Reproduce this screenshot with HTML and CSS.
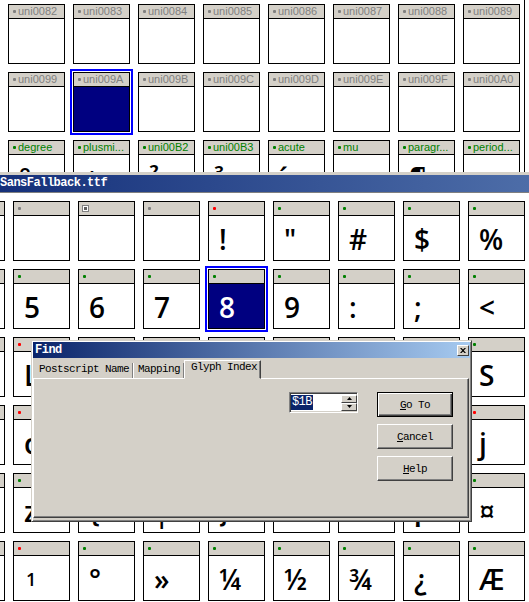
FILE: index.html
```html
<!DOCTYPE html>
<html lang="en">
<head>
  <meta charset="UTF-8">
  <title>Find - SansFallback.ttf</title>
  <link rel="stylesheet" href="styles.css">
</head>
<body>
  <!-- font view behind -->
  <div class="back">
    <div class="glyphs">
      <div class="cell"><div class="head"><i></i>uni0082</div><div class="glyph"></div></div>
      <div class="cell"><div class="head"><i></i>uni0083</div><div class="glyph"></div></div>
      <div class="cell"><div class="head"><i></i>uni0084</div><div class="glyph"></div></div>
      <div class="cell"><div class="head"><i></i>uni0085</div><div class="glyph"></div></div>
      <div class="cell"><div class="head"><i></i>uni0086</div><div class="glyph"></div></div>
      <div class="cell"><div class="head"><i></i>uni0087</div><div class="glyph"></div></div>
      <div class="cell"><div class="head"><i></i>uni0088</div><div class="glyph"></div></div>
      <div class="cell"><div class="head"><i></i>uni0089</div><div class="glyph"></div></div>

      <div class="cell"><div class="head"><i></i>uni0099</div><div class="glyph"></div></div>
      <div class="cell sel"><div class="head"><i></i>uni009A</div><div class="glyph"></div></div>
      <div class="cell"><div class="head"><i></i>uni009B</div><div class="glyph"></div></div>
      <div class="cell"><div class="head"><i></i>uni009C</div><div class="glyph"></div></div>
      <div class="cell"><div class="head"><i></i>uni009D</div><div class="glyph"></div></div>
      <div class="cell"><div class="head"><i></i>uni009E</div><div class="glyph"></div></div>
      <div class="cell"><div class="head"><i></i>uni009F</div><div class="glyph"></div></div>
      <div class="cell"><div class="head"><i></i>uni00A0</div><div class="glyph"></div></div>

      <div class="cell"><div class="head g"><i></i>degree</div><div class="glyph">°</div></div>
      <div class="cell"><div class="head g"><i></i>plusmi...</div><div class="glyph">±</div></div>
      <div class="cell"><div class="head g"><i></i>uni00B2</div><div class="glyph">²</div></div>
      <div class="cell"><div class="head g"><i></i>uni00B3</div><div class="glyph">³</div></div>
      <div class="cell"><div class="head g"><i></i>acute</div><div class="glyph">´</div></div>
      <div class="cell"><div class="head g"><i></i>mu</div><div class="glyph">µ</div></div>
      <div class="cell"><div class="head g"><i></i>paragr...</div><div class="glyph">¶</div></div>
      <div class="cell"><div class="head g"><i></i>period...</div><div class="glyph">·</div></div>
    </div>
    <div class="back-edge"></div>
  </div>

  <!-- font view in front -->
  <div class="front">
    <div class="front-title">SansFallback.ttf</div>
    <div class="glyphs">
      <div class="cell"><div class="head"></div><div class="glyph"></div></div>
      <div class="cell"><div class="head"><i></i></div><div class="glyph"></div></div>
      <div class="cell"><div class="head"><span class="ref-icon"></span></div><div class="glyph"></div></div>
      <div class="cell"><div class="head"><i></i></div><div class="glyph"></div></div>
      <div class="cell"><div class="head r"><i></i></div><div class="glyph">!</div></div>
      <div class="cell"><div class="head g"><i></i></div><div class="glyph">"</div></div>
      <div class="cell"><div class="head g"><i></i></div><div class="glyph">#</div></div>
      <div class="cell"><div class="head g"><i></i></div><div class="glyph">$</div></div>
      <div class="cell"><div class="head g"><i></i></div><div class="glyph">%</div></div>

      <div class="cell"><div class="head g"><i></i></div><div class="glyph">4</div></div>
      <div class="cell"><div class="head g"><i></i></div><div class="glyph">5</div></div>
      <div class="cell"><div class="head g"><i></i></div><div class="glyph">6</div></div>
      <div class="cell"><div class="head g"><i></i></div><div class="glyph">7</div></div>
      <div class="cell sel"><div class="head g"><i></i></div><div class="glyph">8</div></div>
      <div class="cell"><div class="head g"><i></i></div><div class="glyph">9</div></div>
      <div class="cell"><div class="head g"><i></i></div><div class="glyph">:</div></div>
      <div class="cell"><div class="head g"><i></i></div><div class="glyph">;</div></div>
      <div class="cell"><div class="head g"><i></i></div><div class="glyph">&lt;</div></div>

      <div class="cell"><div class="head g"><i></i></div><div class="glyph">K</div></div>
      <div class="cell"><div class="head r"><i></i></div><div class="glyph">L</div></div>
      <div class="cell"><div class="head g"><i></i></div><div class="glyph">M</div></div>
      <div class="cell"><div class="head g"><i></i></div><div class="glyph">N</div></div>
      <div class="cell"><div class="head g"><i></i></div><div class="glyph">O</div></div>
      <div class="cell"><div class="head g"><i></i></div><div class="glyph">P</div></div>
      <div class="cell"><div class="head g"><i></i></div><div class="glyph">Q</div></div>
      <div class="cell"><div class="head g"><i></i></div><div class="glyph">R</div></div>
      <div class="cell"><div class="head g"><i></i></div><div class="glyph">S</div></div>

      <div class="cell"><div class="head g"><i></i></div><div class="glyph">b</div></div>
      <div class="cell"><div class="head r"><i></i></div><div class="glyph">c</div></div>
      <div class="cell"><div class="head g"><i></i></div><div class="glyph">d</div></div>
      <div class="cell"><div class="head g"><i></i></div><div class="glyph">e</div></div>
      <div class="cell"><div class="head g"><i></i></div><div class="glyph">f</div></div>
      <div class="cell"><div class="head g"><i></i></div><div class="glyph">g</div></div>
      <div class="cell"><div class="head g"><i></i></div><div class="glyph">h</div></div>
      <div class="cell"><div class="head g"><i></i></div><div class="glyph">i</div></div>
      <div class="cell"><div class="head r"><i></i></div><div class="glyph">j</div></div>

      <div class="cell"><div class="head g"><i></i></div><div class="glyph">y</div></div>
      <div class="cell"><div class="head g"><i></i></div><div class="glyph">z</div></div>
      <div class="cell"><div class="head g"><i></i></div><div class="glyph">{</div></div>
      <div class="cell"><div class="head g"><i></i></div><div class="glyph">|</div></div>
      <div class="cell"><div class="head g"><i></i></div><div class="glyph">}</div></div>
      <div class="cell"><div class="head g"><i></i></div><div class="glyph">~</div></div>
      <div class="cell"><div class="head"><i></i></div><div class="glyph"></div></div>
      <div class="cell"><div class="head g"><i></i></div><div class="glyph">¡</div></div>
      <div class="cell"><div class="head g"><i></i></div><div class="glyph">¤</div></div>

      <div class="cell"><div class="head"></div><div class="glyph"></div></div>
      <div class="cell"><div class="head r"><i></i></div><div class="glyph"><span class="sup">1</span></div></div>
      <div class="cell"><div class="head g"><i></i></div><div class="glyph">°</div></div>
      <div class="cell"><div class="head g"><i></i></div><div class="glyph">»</div></div>
      <div class="cell"><div class="head g"><i></i></div><div class="glyph">¼</div></div>
      <div class="cell"><div class="head g"><i></i></div><div class="glyph">½</div></div>
      <div class="cell"><div class="head g"><i></i></div><div class="glyph">¾</div></div>
      <div class="cell"><div class="head g"><i></i></div><div class="glyph">¿</div></div>
      <div class="cell"><div class="head g"><i></i></div><div class="glyph">Æ</div></div>
    </div>
  </div>

  <!-- Find dialog -->
  <div class="find">
    <div class="find-title">
      <span>Find</span>
      <button class="close-btn">
        <svg width="6" height="5" viewBox="0 0 6 5"><path d="M0 0h1.5l1.5 1.6 1.5-1.6h1.5l-2.2 2.5 2.2 2.5h-1.5l-1.5-1.6-1.5 1.6h-1.5l2.2-2.5z" fill="#000"/></svg>
      </button>
    </div>
    <div class="tabs">
      <span class="tab">Postscript Name</span>
      <span class="tab">Mapping</span>
      <span class="tab active">Glyph Index</span>
    </div>
    <div class="panel">
      <div class="spin-field">
        <span class="value">$1B</span>
        <span class="spin">
          <b><svg width="5" height="3" viewBox="0 0 5 3"><path d="M2.5 0 5 3H0z" fill="#000"/></svg></b>
          <b><svg width="5" height="3" viewBox="0 0 5 3"><path d="M0 0h5L2.5 3z" fill="#000"/></svg></b>
        </span>
      </div>
      <div class="buttons">
        <button class="btn default"><u>G</u>o To</button>
        <button class="btn"><u>C</u>ancel</button>
        <button class="btn"><u>H</u>elp</button>
      </div>
    </div>
  </div>
</body>
</html>
```

FILE: styles.css
```css
* {
  margin: 0;
  padding: 0;
  box-sizing: border-box;
}

body {
  width: 529px;
  height: 602px;
  overflow: hidden;
  position: relative;
  background: #fff;
  font-family: "Liberation Sans", Arial, sans-serif;
}

/* glyph grids */
.glyphs {
  display: grid;
  grid-template-columns: repeat(8, 57px);
  grid-auto-rows: 60px;
  gap: 8px;
}

.cell {
  border: 1px solid #000;
  background: #fff;
  display: flex;
  flex-direction: column;
}

.head {
  height: 14px;
  flex: none;
  background: #d4d0c8;
  border-bottom: 1px solid #000;
  display: flex;
  align-items: center;
  gap: 2px;
  padding-left: 4px;
  font-size: 11px;
  line-height: 13px;
  color: #808080;
  white-space: nowrap;
  overflow: hidden;
}

.head i {
  width: 3px;
  height: 3px;
  flex: none;
  border-radius: 1px;
  background: currentColor;
}

.head.g {
  color: #008000;
}

.head.r {
  color: #f00;
}

.ref-icon {
  width: 7px;
  height: 7px;
  margin-left: -1px;
  border: 1px solid #808080;
  background: #fff;
  display: flex;
  align-items: center;
  justify-content: center;
}

.ref-icon::after {
  content: "";
  width: 3px;
  height: 3px;
  background: #606060;
}

.glyph {
  flex: 1;
  overflow: hidden;
  white-space: nowrap;
  padding: 9px 0 0 10px;
  font-family: "Open Sans", "DejaVu Sans", sans-serif;
  font-weight: 600;
  font-size: 28px;
  line-height: 28px;
  color: #000;
}

.glyph .sup {
  font-size: 18px;
  vertical-align: 8px;
  padding-left: 2px;
}

.cell.sel {
  outline: 2px solid #0000ff;
  outline-offset: 1px;
}

.cell.sel .glyph {
  background: #000080;
  color: #fff;
}

/* back window */
.back {
  height: 172px;
  overflow: hidden;
  display: flex;
}

.back .glyphs {
  padding: 4px 0 0 8px;
}

.back-edge {
  margin-left: 4px;
  width: 5px;
  border-left: 1px solid #000;
}

/* front window */
.front {
  border-top: 3px solid #d4d0c8;
}

.front-title {
  height: 18px;
  background: linear-gradient(90deg, #15307a, #4d6da8);
  border-bottom: 1px solid #808080;
  color: #fff;
  font: bold 12px "Liberation Mono", monospace;
  letter-spacing: -0.5px;
  line-height: 17px;
}

.front .glyphs {
  grid-template-columns: repeat(9, 57px);
  margin-left: -52px;
  padding-top: 8px;
}

/* find dialog */
.find {
  position: absolute;
  left: 31px;
  top: 340px;
  width: 441px;
  height: 182px;
  padding: 1px;
  background: #d4d0c8;
  border: 1px solid;
  border-color: #d4d0c8 #404040 #404040 #d4d0c8;
  box-shadow: inset 1px 1px #fff, inset -1px -1px #808080;
  display: flex;
  flex-direction: column;
  font-family: "Liberation Mono", monospace;
  font-size: 11px;
  letter-spacing: -0.6px;
  color: #000;
}

.find-title {
  height: 16px;
  flex: none;
  display: flex;
  align-items: center;
  justify-content: space-between;
  padding: 0 1px 0 2px;
  background: linear-gradient(90deg, #0a246a, #a6caf0);
  color: #fff;
  font-size: 12px;
  font-weight: bold;
  letter-spacing: -0.5px;
}

.close-btn {
  width: 12px;
  height: 11px;
  background: #d4d0c8;
  border: 1px solid;
  border-color: #fff #404040 #404040 #fff;
  display: flex;
  align-items: center;
  justify-content: center;
}

.tabs {
  height: 20px;
  flex: none;
  display: flex;
  align-items: flex-end;
}

.tab {
  height: 15px;
  padding: 0 3px 0 6px;
  border-right: 1px solid #808080;
  line-height: 13px;
  white-space: nowrap;
}

.tab + .tab {
  padding-left: 5px;
  box-shadow: inset 1px 0 #fff;
}

.tab.active {
  height: 19px;
  margin-bottom: -1px;
  padding: 0 3px 0 6px;
  background: #d4d0c8;
  border: 1px solid;
  border-color: #fff #404040 transparent #fff;
  box-shadow: inset -1px 0 #808080;
  line-height: 13px;
  position: relative;
}

.panel {
  flex: 1;
  margin: 0 1px 2px 0;
  border: 1px solid;
  border-color: #fff #404040 #404040 #fff;
  box-shadow: inset -1px -1px #808080;
  display: flex;
  align-items: flex-start;
  padding: 13px 0 0 255px;
}

.spin-field {
  width: 69px;
  height: 21px;
  background: #fff;
  border: 1px solid;
  border-color: #808080 #fff #fff #808080;
  box-shadow: inset 1px 1px #404040, inset -1px -1px #d4d0c8;
  display: flex;
  align-items: center;
  padding-left: 1px;
}

.value {
  height: 15px;
  line-height: 15px;
  padding: 0 1px;
  background: #0a246a;
  color: #fff;
  font-size: 12px;
}

.spin {
  margin-left: auto;
  width: 16px;
  height: 16px;
  display: flex;
  flex-direction: column;
}

.spin b {
  flex: 1;
  background: #d4d0c8;
  border: 1px solid;
  border-color: #fff #404040 #404040 #fff;
  display: flex;
  align-items: center;
  justify-content: center;
}

.buttons {
  margin-left: 19px;
  display: flex;
  flex-direction: column;
  gap: 7px;
}

.btn {
  width: 76px;
  height: 25px;
  background: #d4d0c8;
  border: 1px solid;
  border-color: #fff #404040 #404040 #fff;
  box-shadow: inset -1px -1px #808080;
  font: inherit;
  letter-spacing: -0.6px;
  color: #000;
}

.btn.default {
  border-color: #000;
  box-shadow: inset 1px 1px #fff, inset -1px -1px #404040, inset -2px -2px #808080;
}
```
